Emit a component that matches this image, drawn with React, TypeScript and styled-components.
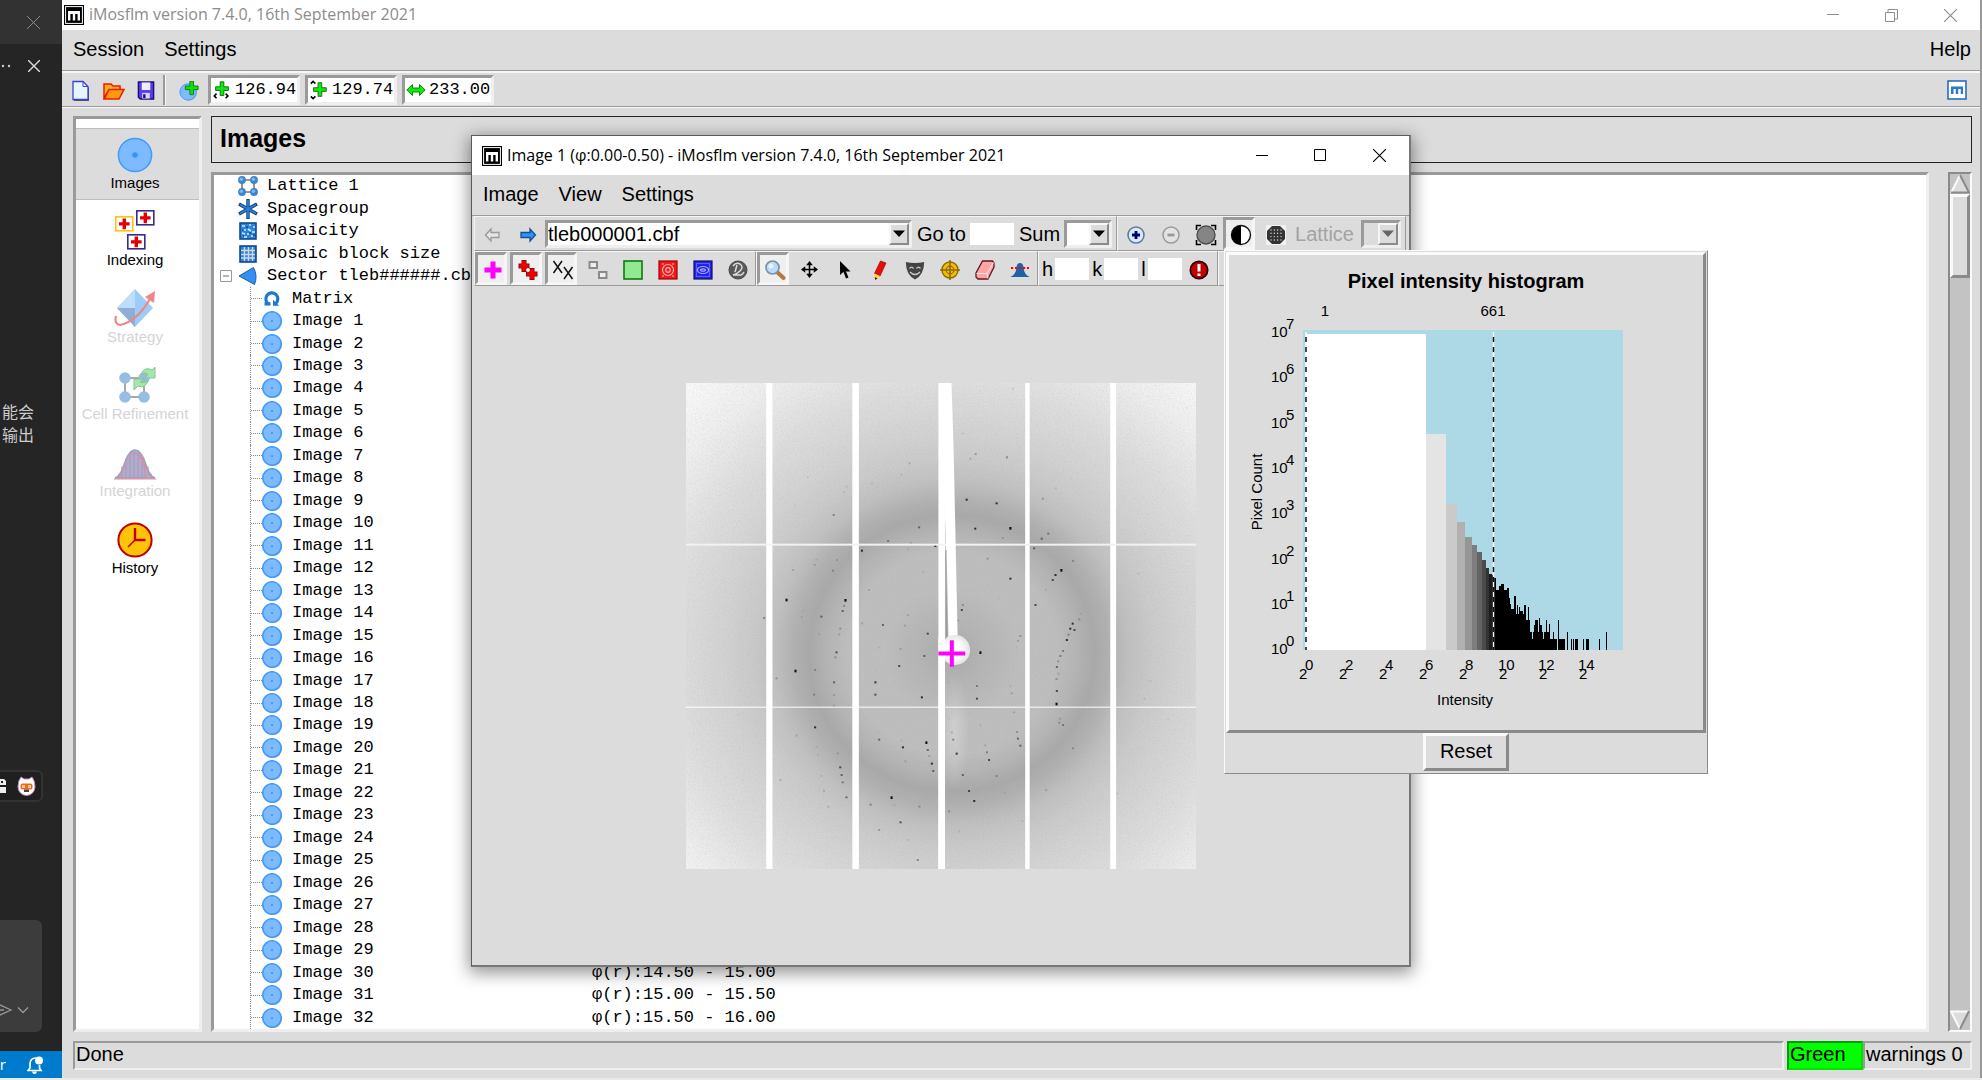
import React from "react";
import styled, { createGlobalStyle, css } from "styled-components";

const sans = `"Liberation Sans", Arial, sans-serif`;
const mono = `"Liberation Mono", "Courier New", monospace`;
const ui = `"Open Sans", "Noto Sans", sans-serif`;
const cjk = `"Liberation Sans", "Noto Sans CJK SC", sans-serif`;
const face = "#dcdcdc";

const Global = createGlobalStyle`
  *, *::before, *::after { box-sizing: border-box; }
  body { margin: 0; background: #e9e9e9; font-family: ${sans}; font-size: 20px; line-height: 24px; color: #000; overflow: hidden; }
  button, input, select { font: inherit; color: inherit; margin: 0; padding: 0; border: 0; border-radius: 0; background: none; }
  svg { display: block; flex: none; }
`;

const sunken = css`
  border: 3px solid;
  border-color: #9a9a9a #efefef #efefef #9a9a9a;
`;
const raised = css`
  border: 3px solid;
  border-color: #fafafa #8a8a8a #8a8a8a #fafafa;
`;

/* ---------- desktop ---------- */

const Desktop = styled.div`
  position: relative;
  display: flex;
  height: 100vh;
  padding-bottom: 2px;
`;

/* ---------- editor strip ---------- */

const EditorStrip = styled.aside`
  width: 62px;
  display: flex;
  flex-direction: column;
  background: #252526;
  color: #ccc;
  overflow: hidden;
`;
const EditorTab = styled.div`
  height: 44px;
  padding-right: 22px;
  display: flex;
  align-items: center;
  justify-content: flex-end;
  background: #323233;
`;
const EditorActions = styled.div`
  height: 44px;
  padding-right: 22px;
  display: flex;
  align-items: center;
  justify-content: flex-end;
  gap: 17px;
`;
const EditorText = styled.p`
  margin: 313px 28px 0 0;
  font: 16px/23px ${cjk};
  display: flex;
  flex-direction: column;
  align-items: flex-end;
  white-space: nowrap;
`;
const Badge = styled.div`
  margin: 323px 19px 0 0;
  height: 32px;
  border: 2px solid #333334;
  border-left: 0;
  border-radius: 0 6px 6px 0;
  background: #1f1f1f;
  display: flex;
  align-items: center;
  justify-content: flex-end;
  padding-right: 5px;
  gap: 11px;
`;
const ChatBox = styled.div`
  margin: 118px 20px 0 0;
  height: 112px;
  border-radius: 0 6px 6px 0;
  background: #3c3c3c;
  display: flex;
  align-items: flex-end;
  justify-content: flex-end;
  gap: 5px;
  padding: 0 13px 15px 0;
`;
const EditorStatus = styled.div`
  margin-top: auto;
  height: 27px;
  background: #007acc;
  color: #fff;
  font: 15px/27px ${ui};
  display: flex;
  align-items: center;
  justify-content: flex-end;
  gap: 21px;
  padding-right: 18px;
`;

/* ---------- window parts ---------- */

const IconButton = styled.button<{ $w?: number; $on?: boolean }>`
  width: ${(p) => p.$w ?? 35}px;
  align-self: stretch;
  display: flex;
  align-items: center;
  justify-content: center;
  flex: none;
  padding-top: 2px;
  ${(p) =>
    p.$on &&
    css`
      width: 32px;
      margin-right: 3px;
      padding: 2px 0 0 3px;
      background: #efefef;
      border: 3px solid;
      border-color: #9a9a9a #f6f6f6 #f6f6f6 #9a9a9a;
    `}
`;

const TitleBar = styled.header<{ $h: number; $dim?: boolean }>`
  height: ${(p) => p.$h}px;
  flex: none;
  display: flex;
  align-items: center;
  padding-left: ${(p) => (p.$dim ? 2 : 10)}px;
  background: #fff;
  color: ${(p) => (p.$dim ? "#8c8c8c" : "#000")};
  font: 16px/20px ${ui};
`;
const TitleText = styled.h1`
  margin: 0 0 2px 5px;
  flex: 1;
  font: inherit;
`;
const WinControl = styled.button`
  width: 59px;
  flex: none;
  align-self: stretch;
  display: flex;
  align-items: center;
  justify-content: center;
`;
const MenuBar = styled.nav`
  height: 41px;
  flex: none;
  display: flex;
  align-items: center;
  gap: 20px;
  padding: 0 9px 3px 11px;
  border-bottom: 1px solid #9a9a9a;
`;
const MenuItem = styled.button<{ $end?: boolean }>`
  margin-left: ${(p) => (p.$end ? "auto" : 0)};
`;

/* ---------- main window ---------- */

const MainWindow = styled.main`
  flex: 1;
  min-width: 0;
  display: flex;
  flex-direction: column;
  background: ${face};
  border-right: 2px solid #999;
`;
const MainToolbar = styled.div`
  height: 36px;
  flex: none;
  display: flex;
  align-items: center;
  padding: 0 13px 0 2px;
  border-top: 2px solid #f6f6f6;
  border-bottom: 1px solid #9a9a9a;
`;
const Divider = styled.span`
  width: 3px;
  height: 30px;
  margin: 0 5px 0 2px;
  border-left: 2px solid #9a9a9a;
  border-right: 1px solid #f6f6f6;
`;
const Reading = styled.label`
  ${sunken}
  width: 92px;
  height: 30px;
  margin: 0 3px 0 2px;
  padding-left: 1px;
  display: flex;
  align-items: center;
  background: #fff;
  input { width: 62px; min-width: 0; flex: 1; font: 17px/22px ${mono}; padding-left: 3px; }
`;
const Spacer = styled.span`
  flex: 1;
`;
const Body = styled.div`
  flex: 1;
  min-height: 0;
  display: flex;
  gap: 9px;
  padding: 8px 8px 9px 11px;
  border-top: 1px solid #f6f6f6;
`;
const Sidebar = styled.nav`
  ${sunken}
  width: 129px;
  display: flex;
  flex-direction: column;
  gap: 5px;
  padding-top: 9px;
  background: #fff;
`;
const SideItem = styled.button<{ $on?: boolean }>`
  height: 72px;
  flex: none;
  display: flex;
  flex-direction: column;
  align-items: center;
  justify-content: flex-end;
  gap: 1px;
  padding: 0 5px 7px 0;
  border: solid ${(p) => (p.$on ? "#bdbdbd" : "transparent")};
  border-width: 1px 0;
  background: ${(p) => (p.$on ? face : "none")};
  font-size: 15px;
  line-height: 18px;
  &:disabled { color: #d4d4d4; svg { opacity: 0.5; } }
`;
const Content = styled.section`
  flex: 1;
  min-width: 0;
  display: flex;
  flex-direction: column;
  gap: 9px;
`;
const Heading = styled.h2`
  margin: 0;
  height: 47px;
  flex: none;
  border: 1px solid #222;
  padding: 0 8px;
  font-size: 25px;
  line-height: 43px;
`;
const TreeArea = styled.div`
  flex: 1;
  min-height: 0;
  display: flex;
  gap: 19px;
`;
const Tree = styled.ul`
  ${sunken}
  flex: 1;
  min-width: 0;
  margin: 0;
  padding: 0 0 0 1px;
  list-style: none;
  display: flex;
  flex-direction: column;
  background: #fff;
  font: 17px/22px ${mono};
`;
const TreeRow = styled.li`
  flex: 1;
  min-height: 0;
  display: grid;
  grid-template-columns: 377px 1fr;
  align-items: center;
  white-space: pre;
`;
const TreeName = styled.span<{ $child?: boolean }>`
  align-self: stretch;
  display: flex;
  align-items: center;
  gap: ${(p) => (p.$child ? 10 : 9)}px;
  margin-left: ${(p) => (p.$child ? 35 : 0)}px;
  border-left: ${(p) => (p.$child ? "1px dotted #888" : "0")};
`;
const Stub = styled.span`
  width: 11px;
  margin-right: -10px;
  border-top: 1px dotted #888;
`;
const Fold = styled.span`
  width: 23px;
  margin-right: -9px;
  padding-left: 5px;
  flex: none;
`;
const ScrollTrack = styled.div`
  width: 24px;
  border: 2px solid;
  border-color: #8a8a8a #fafafa #fafafa #8a8a8a;
  background: #c3c3c3;
  display: flex;
  flex-direction: column;
  align-items: stretch;
`;
const ScrollButton = styled.button`
  height: 20px;
  display: flex;
  justify-content: center;
`;
const ScrollThumb = styled.div`
  ${raised}
  height: 84px;
  margin-bottom: auto;
  background: ${face};
`;
const StatusBar = styled.footer`
  flex: none;
  height: 37px;
  display: flex;
  padding: 0 8px 8px 11px;
`;
const StatusCell = styled.output<{ $grow?: boolean; $w?: number; $ok?: boolean }>`
  ${sunken}
  border-width: 2px;
  ${(p) => (p.$grow ? "flex: 1; margin-right: 3px;" : `width: ${p.$w}px;`)}
  ${(p) => p.$ok && "background: #00ff00; border-color: #0a9a0a #00e000 #00e000 #0a9a0a;"}
  padding-left: 1px;
  line-height: 23px;
  white-space: nowrap;
`;

/* ---------- image window ---------- */

const ImageWindow = styled.section`
  position: absolute;
  left: 471px;
  top: 135px;
  width: 940px;
  height: 832px;
  display: flex;
  flex-direction: column;
  background: ${face};
  border: 1px solid #5a5a5a;
  border-right: 2px solid #777;
  border-bottom: 2px solid #777;
  box-shadow: 0 4px 16px 2px rgba(0, 0, 0, 0.42);
`;
const ToolRow = styled.div`
  height: 35px;
  flex: none;
  display: flex;
  padding: 0 3px 0 2px;
`;
const ToolGroup = styled.div<{ $grow?: boolean; $end?: boolean }>`
  flex: ${(p) => (p.$grow ? "1" : "none")};
  min-width: 0;
  display: flex;
  align-items: center;
  padding-right: ${(p) => (p.$end ? 4 : 0)}px;
  border: 1px solid;
  border-color: #f6f6f6 #9a9a9a #9a9a9a #f6f6f6;
`;
const ComboBox = styled.span<{ $w?: number; $off?: boolean }>`
  ${sunken}
  ${(p) => (p.$w ? `width: ${p.$w}px;` : "flex: 1;")}
  height: 28px;
  display: flex;
  background: ${(p) => (p.$off ? face : "#fff")};
  select {
    flex: 1;
    min-width: 0;
    appearance: none;
    outline: none;
    opacity: 1;
    line-height: 20px;
  }
`;
const Arrow = styled.span`
  width: 20px;
  border: 2px solid;
  border-color: #f6f6f6 #8a8a8a #8a8a8a #f6f6f6;
  background: ${face};
  display: flex;
  align-items: center;
  justify-content: center;
`;
const FieldLabel = styled.label<{ $off?: boolean; $before?: number; $after?: number }>`
  margin: 0 ${(p) => p.$after ?? 4}px 0 ${(p) => p.$before ?? 5}px;
  white-space: nowrap;
  line-height: 22px;
  color: ${(p) => (p.$off ? "#a3a3a3" : "inherit")};
`;
const Entry = styled.input<{ $w: number }>`
  && { width: ${(p) => p.$w}px; height: 22px; background: #fff; flex: none; }
`;
const Canvas = styled.div`
  flex: 1;
  display: flex;
  align-items: center;
  justify-content: center;
`;

/* ---------- histogram ---------- */

const Popup = styled.section`
  position: absolute;
  left: 1224px;
  top: 250px;
  width: 484px;
  height: 524px;
  display: flex;
  flex-direction: column;
  align-items: center;
  background: ${face};
  border: 1px solid;
  border-color: #fafafa #8a8a8a #8a8a8a #fafafa;
  padding: 1px 1px 2px 1px;
`;
const PlotFrame = styled.div`
  ${raised}
  flex: 1;
  align-self: stretch;
`;
const ResetButton = styled.button`
  ${raised}
  width: 86px;
  height: 38px;
  padding-bottom: 2px;
`;

/* ---------- icons ---------- */

const MLogo = ({ blue }: { blue?: boolean }) =>
  blue ? (
    <svg width="20" height="20" viewBox="0 0 20 20">
      <rect x="1" y="1" width="18" height="18" fill="#fff" stroke="#2a6fc0" strokeWidth="1.6" />
      <path d="M4 6.5H16V14H13.8V9H11.2V14H8.8V9H6.5V14H4Z" fill="#2a78d0" />
    </svg>
  ) : (
    <svg width="20" height="20" viewBox="0 0 20 20">
      <rect width="20" height="20" fill="#000" />
      <rect x="1.6" y="1.6" width="16.8" height="16.8" fill="none" stroke="#fff" strokeWidth="1" />
      <path d="M4 6H16V15.5H13.6V9H11.2V15.5H8.8V9H6.4V15.5H4Z" fill="#fff" />
    </svg>
  );

const Cross = ({ size = 13, color, w = 1 }: { size?: number; color: string; w?: number }) => (
  <svg width={size} height={size} viewBox="0 0 12 12">
    <path d="M0 0L12 12M12 0L0 12" stroke={color} strokeWidth={w} />
  </svg>
);
const Minimise = ({ c }: { c: string }) => (
  <svg width="12" height="12"><path d="M0 5.5H12" stroke={c} /></svg>
);
const Maximise = ({ c, restore }: { c: string; restore?: boolean }) => (
  <svg width="13" height="13" fill="none" stroke={c}>
    {restore ? <path d="M.5 3.5H9.5V12.5H.5ZM3 3.5V.5H12.5V10H9.5" /> : <path d="M.5 .5H11.5V11.5H.5Z" />}
  </svg>
);

const Disc = ({ size }: { size: number }) => (
  <svg width={size} height={size} viewBox="0 0 36 36">
    {size < 30 && <circle cx="20" cy="20" r="16" fill="#7d7d7d" opacity=".6" />}
    <circle cx="18" cy="18" r="16.6" fill="#7ebaff" stroke="#3f9bff" strokeWidth={size < 30 ? 3 : 1.5} />
    <circle cx="18" cy="18" r={size < 30 ? 2 : 2.8} fill="#3a94f5" />
  </svg>
);

const LatticeIcon = () => (
  <svg width="20" height="20" viewBox="0 0 20 20">
    <path d="M4 4H16V16H4Z" fill="none" stroke="#777" strokeWidth="1.6" />
    {[[4, 4], [16, 4], [4, 16], [16, 16]].map(([x, y]) => (
      <g key={`${x}-${y}`}>
        <circle cx={x} cy={y} r="3.9" fill="#3b85cc" />
        <circle cx={x - 0.6} cy={y - 0.8} r="1.8" fill="#7fb9ee" />
      </g>
    ))}
  </svg>
);
const StarIcon = () => (
  <svg width="20" height="20" viewBox="0 0 20 20" strokeLinecap="butt">
    <path d="M10 0V20M1 5L19 15M19 5L1 15" stroke="#0f3f78" strokeWidth="3.4" />
    <path d="M10 1V19M2 5.5L18 14.5M18 5.5L2 14.5" stroke="#2b80d8" strokeWidth="1.7" />
  </svg>
);
const MosaicIcon = () => (
  <svg width="20" height="20" viewBox="0 0 20 20">
    <rect x="2" y="2" width="16" height="16" fill="#2b83e0" stroke="#0f4c8c" strokeWidth="1.6" />
    <path d="M4 5h3M11 4h2M15 6h2M6 9h2M10 8l3 2M14 11h3M4 12l3 1M9 13h2M6 16h3M13 15h2" stroke="#d6e9fb" strokeWidth="1.6" />
    <path d="M4 9h1M8 6h2M11 12h2M15 14h2M5 15h1" stroke="#0f4c8c" strokeWidth="1.6" />
  </svg>
);
const BlockIcon = () => (
  <svg width="20" height="20" viewBox="0 0 20 20">
    <rect x="2" y="2" width="16" height="16" fill="#2b83e0" stroke="#0f4c8c" strokeWidth="1.6" />
    <path d="M6.5 3V17M10.5 3V17M14.5 3V17M3 6.5H17M3 10.5H17M3 14H17" stroke="#d3d6da" strokeWidth="1.4" />
  </svg>
);
const SectorIcon = () => (
  <svg width="20" height="20" viewBox="0 0 20 20">
    <path d="M1 10L15.5 1.5Q20 10 16.5 18.5Z" fill="#3390f2" stroke="#1b5fae" />
  </svg>
);
const MatrixIcon = () => (
  <svg width="20" height="20" viewBox="0 0 20 20">
    <path d="M7 15.2A6 6 0 1 1 13.8 14.4" fill="none" stroke="#1b78d2" strokeWidth="3.2" />
    <path d="M2.5 13.2H8.5V16.5H2.5ZM11 10.8V16.8H17.2Z" fill="#1b78d2" />
  </svg>
);
const MinusBox = () => (
  <svg width="12" height="12"><path d="M.5 .5H11.5V11.5H.5Z" fill="#fff" stroke="#999" /><path d="M3 6H9" stroke="#666" /></svg>
);

const Tile = ({ x, y, c }: { x: number; y: number; c: string }) => (
  <g transform={`translate(${x} ${y})`}>
    <rect x=".8" y=".8" width="17" height="14" fill="#fff" stroke={c} strokeWidth="1.6" />
    <path d="M9.3 2.6V13.2M4 7.9H14.6" stroke="#e00000" strokeWidth="3.4" />
  </g>
);
const IndexingIcon = () => (
  <svg width="42" height="40" viewBox="0 0 42 40">
    <Tile x={1} y={6} c="#ffc20e" />
    <Tile x={22} y={0} c="#352c8c" />
    <Tile x={13} y={24} c="#352c8c" />
  </svg>
);
const StrategyIcon = () => (
  <svg width="42" height="38" viewBox="0 0 42 38">
    <path d="M21 0L39 19L21 38L3 19Z" fill="#3f9bf5" />
    <path d="M3 19H21V38Z" fill="#1c62a8" />
    <path d="M21 0V19H3Z" fill="#7ebcf8" />
    <path d="M2 27Q0 35 6 36Q24 32 37 8" fill="none" stroke="#e01010" strokeWidth="2.2" />
    <path d="M41 2L31 8L40 14Z" fill="#e01010" />
  </svg>
);
const RefineIcon = () => (
  <svg width="42" height="38" viewBox="0 0 42 38">
    <path d="M11 12H30V31H11Z" fill="none" stroke="#555" strokeWidth="2" />
    {[[11, 12], [11, 31], [30, 31], [30, 12]].map(([x, y]) => (
      <circle key={`${x}-${y}`} cx={x} cy={y} r="5.8" fill="#2f7fc8" />
    ))}
    <path d="M27 8Q31 0 38 4L41 1V12H31L34 8Q31 6 27 8Z" fill="#49d05a" stroke="#158a28" />
    <path d="M34 15Q31 23 24 20L20 24V13H30L26 16Q30 18 34 15Z" fill="#49d05a" stroke="#158a28" />
  </svg>
);
const IntegrationIcon = () => (
  <svg width="42" height="32" viewBox="0 0 42 32">
    <path d="M1 29Q7 27 11 13Q15 1 21 1Q27 1 31 13Q35 27 41 29Z" fill="#2f6fc0" stroke="#1f4f90" strokeWidth="1.5" />
    <path d="M0 30H42M5 30V26H8V18H12V10H16V4H26V10H30V18H34V26H37V30M8 30V24M12 30V14M16 30V6M20 30V2M24 30V4M28 30V8M31 30V16" fill="none" stroke="#d01030" strokeWidth="1.2" />
  </svg>
);
const HistoryIcon = () => (
  <svg width="36" height="36" viewBox="0 0 36 36">
    <circle cx="18" cy="18" r="16.6" fill="#ffc40a" stroke="#c00000" strokeWidth="2" />
    <path d="M18 6V18H28.5" fill="none" stroke="#c00000" strokeWidth="2.4" />
    <path d="M18 18L11 25" stroke="#c00000" strokeWidth="1.4" />
  </svg>
);

const NewIcon = () => (
  <svg width="20" height="22" viewBox="0 0 20 22">
    <path d="M3 3H13L18 8V21H3Z" fill="#555" />
    <path d="M2 1.5H12L17 6.5V19.5H2Z" fill="#e4f6ff" stroke="#3f3fd8" strokeWidth="1.3" />
    <path d="M12 1.5V6.5H17" fill="none" stroke="#3f3fd8" />
  </svg>
);
const OpenIcon = () => (
  <svg width="22" height="18" viewBox="0 0 22 18">
    <path d="M1 16V2H8L10 4H17V8H6Z" fill="#ffb020" stroke="#f01a00" strokeWidth="1.5" />
    <path d="M1.5 17L6 7.5H21L16 17Z" fill="#ff9a10" stroke="#f01a00" strokeWidth="1.5" />
  </svg>
);
const SaveIcon = () => (
  <svg width="18" height="19" viewBox="0 0 18 20">
    <path d="M1 1H17V19H3L1 17Z" fill="#5a3cf0" stroke="#1a1070" strokeWidth="1.5" />
    <rect x="4.5" y="1.5" width="9" height="8" fill="#f1ecff" />
    <rect x="5" y="12.5" width="8" height="6" fill="#d9d4ee" />
    <rect x="6" y="14" width="2.5" height="4" fill="#1a1070" />
  </svg>
);
const plus = "M6 0H10V5.5H15V9.5H10V15H6V9.5H1V5.5H6Z";
const AddImageIcon = () => (
  <svg width="20" height="20" viewBox="0 0 22 22">
    <circle cx="11" cy="13" r="8.6" fill="#777" opacity=".5" />
    <circle cx="10" cy="12" r="9" fill="#7ebaff" stroke="#3f9bff" />
    <g transform="translate(6 0)"><path d={plus} fill="#10e010" stroke="#0a7a0a" /></g>
  </svg>
);
const BeamXIcon = () => (
  <svg width="20" height="20" viewBox="0 0 20 22">
    <g transform="translate(2 2)"><path d={plus} fill="#10e810" stroke="#0a6a0a" /></g>
    <path d="M4 15L1.5 17.5L4 20M14 15L16.5 17.5L14 20" fill="none" stroke="#000" strokeWidth="1.7" />
  </svg>
);
const BeamYIcon = () => (
  <svg width="20" height="20" viewBox="0 0 20 22">
    <g transform="translate(3 3)"><path d={plus} fill="#10e810" stroke="#0a6a0a" /></g>
    <path d="M1 4L3.5 1.5L6 4M1 18L3.5 20.5L6 18" fill="none" stroke="#000" strokeWidth="1.7" />
  </svg>
);
const DistanceIcon = () => (
  <svg width="20" height="14" viewBox="0 0 20 14">
    <path d="M.8 7L6.5 1.5V5H13.5V1.5L19.2 7L13.5 12.5V9H6.5V12.5Z" fill="#10e810" stroke="#0a8a0a" />
  </svg>
);

const ArrowIcon = ({ back }: { back?: boolean }) => (
  <svg width="18" height="16" viewBox="0 0 18 16">
    {back ? (
      <path d="M1.5 8L7 2V5.5H15V10.5H7V14Z" fill="#e4e4e4" stroke="#999" strokeWidth="1.3" />
    ) : (
      <path d="M16.5 8L11 2V5.5H2V10.5H11V14Z" fill="#2f92f4" stroke="#17508c" strokeWidth="1.3" />
    )}
  </svg>
);
const ZoomIcon = ({ out }: { out?: boolean }) => (
  <svg width="20" height="20" viewBox="0 0 20 20">
    <circle cx="10" cy="10" r="8" fill={out ? "#e3e3e3" : "#d8ebff"} stroke={out ? "#9a9a9a" : "#5478a8"} strokeWidth="1.5" />
    <path d={out ? "M6.5 10H13.5" : "M6 10H14M10 6V14"} stroke={out ? "#999" : "#00007c"} strokeWidth="2.8" />
  </svg>
);
const FitIcon = () => (
  <svg width="22" height="22" viewBox="0 0 22 22">
    <path d="M1.5 6V1.5H6M16 1.5H20.5V6M20.5 16V20.5H16M6 20.5H1.5V16" fill="none" stroke="#000" strokeWidth="1.6" />
    <circle cx="11" cy="11" r="9" fill="#858585" stroke="#4d4d4d" strokeWidth="1.4" />
  </svg>
);
const ContrastIcon = () => (
  <svg width="22" height="22" viewBox="0 0 22 22">
    <circle cx="11" cy="11" r="9.5" fill="#fff" stroke="#111" strokeWidth="1.4" />
    <path d="M11 1.5A9.5 9.5 0 0 0 11 20.5Z" />
  </svg>
);
const dots = [5, 8.3, 11.6, 15];
const DottedIcon = () => (
  <svg width="20" height="20" viewBox="0 0 20 20">
    <rect width="20" height="20" fill="#f2f2f2" />
    <path d="M6 1H14L19 6V14L14 19H6L1 14V6Z" fill="#333" />
    {dots.flatMap((x) => dots.map((y) => <circle key={`${x}-${y}`} cx={x} cy={y} r=".7" fill="#ddd" />))}
  </svg>
);
const PlusIcon = () => (
  <svg width="20" height="20" viewBox="0 0 20 20"><path d="M10 1.5V18.5M1.5 10H18.5" stroke="#ff00ff" strokeWidth="5" /></svg>
);
const SpotsIcon = () => (
  <svg width="22" height="22" viewBox="0 0 22 22">
    <path d="M7 1V13M1.5 7H12.5M15 9V21M9 15H20.5M7 7L15 15" stroke="#7a1010" strokeWidth="5" />
    <path d="M7 2V12M2.5 7H11.5M15 10V20M10 15H19.5" stroke="#f00000" strokeWidth="3.6" />
    <circle cx="11" cy="11" r="2" fill="#eee" />
  </svg>
);
const XXIcon = () => (
  <svg width="22" height="22" viewBox="0 0 22 22">
    <path d="M1.5 2L10 14M10 2L1.5 14M12 8L20.5 20M20.5 8L12 20" stroke="#111" strokeWidth="1.5" />
  </svg>
);
const BoxesIcon = () => (
  <svg width="20" height="20" viewBox="0 0 20 20" fill="#eee" stroke="#8a8a8a" strokeWidth="2">
    <path d="M1.5 2H9V8H1.5ZM11 12H18.5V18H11Z" />
  </svg>
);
const GreenIcon = () => (
  <svg width="20" height="20"><rect x="1" y="1" width="18" height="18" fill="#93e893" stroke="#0d7a0d" strokeWidth="1.6" /></svg>
);
const RedIcon = () => (
  <svg width="20" height="20" viewBox="0 0 20 20" fill="none" stroke="#ffb0b0" strokeWidth="1.2">
    <rect x="1" y="1" width="18" height="18" fill="#f01818" stroke="#a00000" />
    <circle cx="10" cy="10" r="5.5" /><circle cx="10" cy="10" r="2.3" />
    <path d="M4 4H6M14 4H16M4 16H6M14 16H16" />
  </svg>
);
const BlueIcon = () => (
  <svg width="20" height="20" viewBox="0 0 20 20" fill="none" stroke="#a8b0ff" strokeWidth="1.2">
    <rect x="1" y="1" width="18" height="18" fill="#2020e8" stroke="#101070" />
    <rect x="3.5" y="3.5" width="13" height="13" stroke="#5a60ff" />
    <ellipse cx="10" cy="10" rx="5.5" ry="3.5" /><ellipse cx="10" cy="10" rx="2.5" ry="1.2" />
  </svg>
);
const ResolutionIcon = () => (
  <svg width="22" height="22" viewBox="0 0 22 22">
    <circle cx="11" cy="11" r="9" fill="#5a5a5a" stroke="#444" />
    <path d="M6 7Q9 3 13 5Q17 8 13 12Q10 15 6 16H14Q16 15 17 13M10 6L8 13" fill="none" stroke="#ddd" strokeWidth="1.5" />
  </svg>
);
const LensIcon = () => (
  <svg width="22" height="22" viewBox="0 0 22 22">
    <path d="M13 13L19.5 19" stroke="#b8793a" strokeWidth="4" strokeLinecap="round" />
    <circle cx="8.5" cy="8.5" r="6.5" fill="#b8dcfa" stroke="#7a90a8" strokeWidth="1.7" />
    <circle cx="7" cy="7" r="2.5" fill="#eaf6ff" />
  </svg>
);
const MoveIcon = () => (
  <svg width="17" height="17" viewBox="0 0 18 18">
    <path d="M9 2V16M2 9H16" stroke="#000" strokeWidth="1.6" />
    <path d="M9 0L12.5 4.5H5.5ZM9 18L5.5 13.5H12.5ZM0 9L4.5 5.5V12.5ZM18 9L13.5 12.5V5.5Z" />
  </svg>
);
const CursorIcon = () => (
  <svg width="14" height="18" viewBox="0 0 14 18"><path d="M2 0V14L5.5 11L8 17.5L10.5 16.5L8 10.5H12.5Z" /></svg>
);
const PencilIcon = () => (
  <svg width="16" height="22" viewBox="0 0 16 22">
    <path d="M8.5 2L14 4L8 17L2.5 14.5Z" fill="#e80c0c" stroke="#900" strokeWidth=".7" />
    <path d="M2.5 14.5L8 17L3.5 20.5Z" fill="#ffdd20" />
    <path d="M2.8 18L3.2 21L5.5 19.5Z" fill="#700" />
  </svg>
);
const MaskIcon = () => (
  <svg width="20" height="20" viewBox="0 0 20 20">
    <path d="M.8 2Q10 4 19.2 2Q19 15 10 19.5Q1 15 .8 2Z" fill="#444" />
    <path d="M4.5 8.5Q6.5 5.8 8.5 8.5M11.5 8.5Q13.5 5.8 15.5 8.5M5 12Q10 17 15 12" fill="none" stroke="#ccc" strokeWidth="1.3" />
  </svg>
);
const TargetIcon = () => (
  <svg width="20" height="20" viewBox="0 0 20 20">
    <circle cx="10" cy="10" r="8" fill="#f2bd10" stroke="#8f6c00" strokeWidth="1.5" />
    <path d="M10 0V20M0 10H20" stroke="#8f6c00" strokeWidth="1.6" />
    <circle cx="10" cy="10" r="3.8" fill="none" stroke="#8f6c00" strokeWidth="1.2" />
  </svg>
);
const EraserIcon = () => (
  <svg width="20" height="20" viewBox="0 0 20 20">
    <path d="M7.5 1H17.5L19 3V7L13 19H3L1 17V13Z" fill="#ffa3a3" stroke="#5a1d1d" strokeWidth="1.3" />
    <path d="M1.5 13.5H12L18.5 2.5M12 13.5L13 18.5" fill="none" stroke="#fde" strokeWidth="1.2" />
  </svg>
);
const PeakIcon = () => (
  <svg width="20" height="16" viewBox="0 0 20 16">
    <path d="M0 15Q6 13 6.5 5Q7 1 10 1Q13 1 13.5 5Q14 13 20 15Z" fill="#1e62a8" />
    <path d="M1 6H19" stroke="#f00" strokeWidth="2.2" strokeDasharray="2.2 1.8" />
  </svg>
);
const AlertIcon = () => (
  <svg width="20" height="20" viewBox="0 0 20 20">
    <circle cx="10" cy="10" r="8.7" fill="#c40000" stroke="#2a0000" strokeWidth="1.7" />
    <path d="M10 4V11.5M10 13.5V16" stroke="#fff" strokeWidth="3" />
  </svg>
);
const DropArrow = ({ off }: { off?: boolean }) => (
  <svg width="12" height="7" viewBox="0 0 12 7"><path d="M0 .5H12L6 7Z" fill={off ? "#666" : "#000"} /></svg>
);

const MascotIcon = () => (
  <svg width="19" height="20" viewBox="0 0 19 20">
    <path d="M1 11Q1 5 4 1L7 3H12L15 1Q18 5 18 11Q17 19 9.5 19.5Q2 19 1 11Z" fill="#fff" stroke="#c98ac0" />
    <rect x="3.5" y="7.5" width="12" height="6" rx="2" fill="#f26a10" />
    <rect x="5" y="9" width="3" height="3" fill="#ffc79a" /><rect x="11" y="9" width="3" height="3" fill="#ffc79a" />
    <path d="M7 13.5H12V16H7Z" fill="#444" />
  </svg>
);
const GridBitsIcon = () => (
  <svg width="6" height="16" viewBox="0 0 6 16">
    <path d="M0 1H4L6 3V7H0ZM0 9H6V15H0Z" fill="#eee" /><rect x="1" y="3" width="2" height="2" fill="#222" />
  </svg>
);
const BellIcon = () => (
  <svg width="17" height="18" viewBox="0 0 17 18">
    <path d="M9 2Q3 2 3 8V12L1 14.5H14L12.5 12V9" fill="none" stroke="#fff" strokeWidth="1.7" />
    <circle cx="12" cy="4.5" r="4" fill="#fff" /><path d="M5 15.5H10Q9.5 18 7.5 18Q5.5 18 5 15.5Z" fill="#fff" />
  </svg>
);

/* ---------- diffraction image ---------- */

// Spot positions as [x, y, darkness], on the detector's own grid.
const spots: [number, number, number][] = [
  [861, 389, 9], [948, 400, 9], [988, 474, 10], [886, 476, 9], [1098, 491, 6], [1079, 506, 7], [1057, 535, 7], [966, 504, 4],
  [1082, 386, 5], [978, 262, 6], [872, 266, 4], [887, 252, 5], [850, 191, 3], [996, 56, 3], [1119, 355, 3], [1165, 325, 2],
  [1185, 310, 2], [1013, 232, 2], [695, 280, 4], [672, 314, 3], [586, 340, 3], [513, 350, 3], [505, 367, 3], [400, 321, 3],
  [475, 435, 6], [363, 408, 2], [723, 472, 7], [633, 513, 6], [770, 528, 9], [557, 542, 9], [699, 519, 4], [690, 536, 3],
  [425, 569, 3], [419, 585, 4], [484, 570, 4], [473, 602, 5], [357, 600, 4], [338, 689, 10], [509, 690, 10], [505, 708, 5],
  [501, 723, 7], [439, 740, 7], [273, 744, 6], [386, 723, 2], [382, 741, 3], [494, 776, 5], [491, 793, 4], [483, 847, 8],
  [480, 862, 5], [433, 793, 3], [364, 902, 10], [421, 900, 5], [309, 925, 5], [476, 937, 7], [418, 974, 5], [476, 975, 4],
  [476, 1007, 4], [578, 660, 4], [557, 760, 4], [618, 765, 7], [690, 735, 4], [682, 767, 4], [748, 791, 8], [607, 832, 3],
  [669, 837, 4], [738, 858, 7], [665, 888, 8], [596, 937, 9], [596, 974, 8], [596, 899, 2], [731, 982, 9], [735, 605, 3],
  [922, 566, 5], [988, 626, 9], [1170, 573, 5], [1136, 600, 10], [1119, 615, 9], [1111, 630, 8], [1091, 659, 3], [1061, 705, 8],
  [850, 705, 5], [847, 720, 8], [836, 752, 4], [954, 686, 2], [1169, 761, 9], [1162, 776, 9], [1174, 780, 8], [1157, 794, 6],
  [1152, 810, 9], [1188, 748, 5], [1192, 731, 3], [1141, 843, 6], [1133, 858, 6], [1127, 874, 5], [1123, 891, 7], [1128, 911, 4],
  [1122, 927, 5], [1123, 963, 8], [1122, 1001, 10], [1017, 798, 5], [1010, 813, 4], [1006, 830, 2], [901, 847, 10], [891, 948, 6],
  [891, 986, 8], [988, 949, 3], [992, 970, 4], [808, 937, 2], [1132, 1046, 4], [1130, 1058, 5], [1141, 1065, 6], [1170, 1135, 5],
  [999, 1027, 4], [1007, 1086, 5], [1010, 1106, 7], [1017, 1127, 7], [901, 1065, 3], [915, 1126, 4], [920, 1147, 6], [926, 1170, 8],
  [810, 1045, 2], [818, 1087, 4], [822, 1109, 6], [832, 1151, 9], [850, 1215, 7], [868, 1263, 8], [883, 1293, 9], [948, 1218, 5],
  [971, 1268, 3], [810, 1324, 5], [839, 1384, 3], [1023, 1353, 3], [1092, 1260, 4], [744, 1117, 10], [748, 1140, 7], [752, 1158, 4],
  [760, 1181, 9], [764, 1203, 7], [676, 1132, 9], [672, 1111, 3], [683, 1174, 4], [607, 1109, 7], [605, 1087, 2], [421, 1072, 9],
  [367, 1097, 4], [425, 1132, 3], [429, 1155, 3], [487, 1150, 4], [494, 1192, 8], [498, 1215, 7], [501, 1237, 6], [439, 1218, 3],
  [447, 1263, 4], [512, 1282, 7], [459, 1310, 4], [643, 1282, 10], [651, 1305, 3], [582, 1304, 6], [669, 1357, 8], [607, 1380, 5],
  [690, 1410, 3], [719, 1470, 6], [724, 1310, 5], [320, 1230, 4], [211, 1230, 2], [1377, 986, 3], [1395, 934, 3], [1385, 930, 2],
  [1360, 611, 3], [1447, 1048, 2], [1299, 1271, 3], [197, 1034, 2],
];

const Diffraction = () => (
  <svg width="510" height="486" viewBox="46 39 1481 1458" preserveAspectRatio="none">
    <defs>
      <radialGradient id="halo" gradientUnits="userSpaceOnUse" cx="818" cy="850" r="1120">
        <stop offset="0" stopColor="#a9a9a9" />
        <stop offset=".08" stopColor="#b4b4b4" />
        <stop offset=".18" stopColor="#bebebe" />
        <stop offset=".27" stopColor="#bebebe" />
        <stop offset=".32" stopColor="#b5b5b5" />
        <stop offset=".37" stopColor="#a9a9a9" />
        <stop offset=".41" stopColor="#b1b1b1" />
        <stop offset=".46" stopColor="#c0c0c0" />
        <stop offset=".52" stopColor="#cacaca" />
        <stop offset=".6" stopColor="#d3d3d3" />
        <stop offset=".72" stopColor="#dedede" />
        <stop offset=".86" stopColor="#efefef" />
        <stop offset="1" stopColor="#fafafa" />
      </radialGradient>
      <filter id="grain" x="0" y="0" width="100%" height="100%">
        <feTurbulence type="fractalNoise" baseFrequency="0.25" numOctaves="3" seed="4" />
        <feColorMatrix values="0 0 0 0 0.35  0 0 0 0 0.35  0 0 0 0 0.35  2 0 0 0 -0.85" />
      </filter>
      <radialGradient id="stop" cx=".45" cy=".5" r=".5">
        <stop offset=".5" stopColor="#fff" />
        <stop offset="1" stopColor="#e6e6e6" />
      </radialGradient>
      <radialGradient id="streak">
        <stop offset="0" stopColor="#fff" stopOpacity=".28" />
        <stop offset="1" stopColor="#fff" stopOpacity="0" />
      </radialGradient>
    </defs>
    <rect x="46" y="39" width="1481" height="1458" fill="url(#halo)" />
    <ellipse cx="825" cy="1080" rx="42" ry="180" fill="url(#streak)" />
    <rect x="46" y="39" width="1481" height="1458" filter="url(#grain)" opacity=".2" />
    {spots.map(([x, y, d]) => (
      <rect key={`${x}-${y}`} x={x - 3} y={y - 3} width="6" height={d > 9 ? 8 : 6} fill="#000" opacity={(d * d) / 110} />
    ))}
    <path d="M279 39H297V1497H279ZM529 39H548V1497H529ZM779 39H798V1497H779ZM1031 39H1044V1497H1031ZM1278 39H1295V1497H1278Z" fill="#fff" />
    <rect x="46" y="521" width="1481" height="6" fill="#f2f2f2" />
    <rect x="46" y="1010" width="1481" height="3" fill="#fff" />
    <path d="M785 39H817L823 235L829 520L835 810H806L799 470Z" fill="#fff" />
    <path d="M799 540H803L808 800H801Z" fill="#888" opacity=".6" />
    <ellipse cx="828" cy="840" rx="43" ry="45" fill="url(#stop)" />
    <path d="M798 860V1497H779V800H798Z" fill="#fff" />
    <path d="M818 811V890M779 850.5H857" stroke="#ff00ff" strokeWidth="11.5" />
  </svg>
);

/* ---------- histogram plot ---------- */

// Each bar is [left, right, top, colour], in thirds of a pixel.
const bars: [number, number, number, string][] = [
  [678, 738, -19, "#e4e4e4"], [738, 771, 191, "#cacaca"], [771, 796, 247, "#b0b0b0"], [796, 815, 290, "#969696"],
  [815, 830, 316, "#7d7d7d"], [830, 845, 335, "#646464"], [845, 857, 361, "#4b4b4b"], [857, 868, 383, "#333"],
  [868, 876, 402, "#1c1c1c"],
];
const tail =
  "M875 630V405H880V414H889V450H898V438H904V431H912V450H920V443H928V474H931V492H934V507H943V468H947V498H949V521H951V495H955V521H957V500H961V514H969V521H973V495H977V575H979V541H984V500H988V541H991V575H995V597H1000V575H1003V556H1006V541H1013V575H1017V533H1021V556H1025V575H1030V597H1033V575H1037V541H1041V575H1047V553H1051V597H1059V575H1063V597H1070V630ZM1074 630V541H1078V597H1096V630ZM1101 630V575H1104V630ZM1112 630V597H1115V630ZM1119 630V597H1122V630ZM1126 630V597H1134V630ZM1149 630V597H1152V630ZM1159 630V597H1168V630ZM1198 630V597H1201V630ZM1217 630V575H1220V630Z";
const yTicks = [7, 6, 5, 4, 3, 2, 1, 0];
const xTicks = [0, 2, 4, 6, 8, 10, 12, 14];

const Histogram = () => (
  <svg width="100%" height="100%" viewBox="1229 255 474 475" fontFamily={sans} fontSize="15" role="img" aria-label="Pixel intensity histogram">
    <text x="1466" y="288" textAnchor="middle" fontSize="20" fontWeight="700">Pixel intensity histogram</text>
    <text x="1325" y="316" textAnchor="middle">1</text>
    <text x="1493" y="316" textAnchor="middle">661</text>
    {yTicks.map((n, i) => (
      <g key={n}>
        <text x="1271" y={337 + Math.round(i * 45.3)}>10</text>
        <text x="1286" y={329 + Math.round(i * 45.3)}>{n}</text>
      </g>
    ))}
    {xTicks.map((n, i) => (
      <g key={n}>
        <text x={1299 + i * 40} y="679">2</text>
        <text x={n > 9 ? 1498 + (i - 5) * 40 : 1305 + i * 40} y="670">{n}</text>
      </g>
    ))}
    <text x="1465" y="705" textAnchor="middle">Intensity</text>
    <text transform="translate(1262 492) rotate(-90)" textAnchor="middle">Pixel Count</text>
    <rect x="1303" y="330" width="320" height="320" fill="#add8e6" />
    <rect x="1306" y="334" width="120" height="316" fill="#fff" />
    <g transform="translate(1200 440) scale(.33333)" shapeRendering="crispEdges">
      {bars.map(([l, r, t, c]) => <rect key={l} x={l} y={t} width={r - l} height={630 - t} fill={c} />)}
      <path d={tail} />
    </g>
    <path d="M1306 332V650M1493.5 332V650" stroke="#fff" strokeWidth="1.5" />
    <path d="M1306 337V650M1493.5 337V650" stroke="#111" strokeWidth="1.5" strokeDasharray="5 5" />
  </svg>
);

/* ---------- data ---------- */

const roots = [
  { name: "Lattice 1", icon: <LatticeIcon /> },
  { name: "Spacegroup", icon: <StarIcon /> },
  { name: "Mosaicity", icon: <MosaicIcon /> },
  { name: "Mosaic block size", icon: <BlockIcon /> },
  { name: "Sector tleb######.cbf", icon: <SectorIcon />, open: true },
];
const images = Array.from({ length: 32 }, (_, i) => ({
  name: `Image ${i + 1}`,
  phi: `φ(r):${(i / 2).toFixed(2)} - ${((i + 1) / 2).toFixed(2)}`,
}));
const steps = [
  { name: "Images", icon: <Disc size={36} />, on: true },
  { name: "Indexing", icon: <IndexingIcon /> },
  { name: "Strategy", icon: <StrategyIcon />, off: true },
  { name: "Cell Refinement", icon: <RefineIcon />, off: true },
  { name: "Integration", icon: <IntegrationIcon />, off: true },
  { name: "History", icon: <HistoryIcon /> },
];
const overlayTools = [
  { label: "Beam centre", icon: <PlusIcon />, on: true },
  { label: "Spots", icon: <SpotsIcon />, on: true },
  { label: "Bad spots", icon: <XXIcon />, on: true },
  { label: "Predictions", icon: <BoxesIcon /> },
  { label: "Masks", icon: <GreenIcon /> },
  { label: "Spotfinding area", icon: <RedIcon /> },
  { label: "Resolution ellipse", icon: <BlueIcon /> },
  { label: "Resolution limits", icon: <ResolutionIcon /> },
];
const editTools = [
  { label: "Zoom", icon: <LensIcon />, on: true },
  { label: "Pan", icon: <MoveIcon /> },
  { label: "Select", icon: <CursorIcon /> },
  { label: "Draw spot", icon: <PencilIcon /> },
  { label: "Mask", icon: <MaskIcon /> },
  { label: "Circle fit", icon: <TargetIcon /> },
  { label: "Erase", icon: <EraserIcon /> },
  { label: "Pick", icon: <PeakIcon /> },
];

const WindowButtons = ({ c, restore }: { c: string; restore?: boolean }) => (
  <>
    <WinControl aria-label="Minimise"><Minimise c={c} /></WinControl>
    <WinControl aria-label="Maximise"><Maximise c={c} restore={restore} /></WinControl>
    <WinControl aria-label="Close"><Cross color={c} w={1} /></WinControl>
  </>
);

/* ---------- screens ---------- */

const Editor = () => (
  <EditorStrip>
    <EditorTab><Cross size={13} color="#999" w={0.8} /></EditorTab>
    <EditorActions>
      <svg width="10" height="4" fill="#ccc"><circle cx="2" cy="2" r="1.2" /><circle cx="8" cy="2" r="1.2" /></svg>
      <Cross size={12} color="#ddd" w={1.4} />
    </EditorActions>
    <EditorText><span>能会</span><span>输出</span></EditorText>
    <Badge><GridBitsIcon /><MascotIcon /></Badge>
    <ChatBox>
      <svg width="14" height="14" fill="none" stroke="#999" strokeWidth="1.3"><path d="M0 1L13 7L0 13M0 7H6" /></svg>
      <svg width="12" height="14" fill="none" stroke="#999" strokeWidth="1.3"><path d="M1 4.5L6 9.5L11 4.5" /></svg>
    </ChatBox>
    <EditorStatus><span>er</span><BellIcon /></EditorStatus>
  </EditorStrip>
);

const ImageViewer = () => (
  <ImageWindow aria-label="Image 1">
    <TitleBar $h={39}>
      <MLogo />
      <TitleText>Image 1 (φ:0.00-0.50) - iMosflm version 7.4.0, 16th September 2021</TitleText>
      <WindowButtons c="#000" />
    </TitleBar>
    <MenuBar>
      <MenuItem>Image</MenuItem>
      <MenuItem>View</MenuItem>
      <MenuItem>Settings</MenuItem>
    </MenuBar>
    <ToolRow>
      <ToolGroup $grow $end>
        <IconButton aria-label="Previous image"><ArrowIcon back /></IconButton>
        <IconButton aria-label="Next image"><ArrowIcon /></IconButton>
        <ComboBox>
          <select aria-label="Image file"><option>tleb000001.cbf</option></select>
          <Arrow><DropArrow /></Arrow>
        </ComboBox>
        <FieldLabel htmlFor="goto">Go to</FieldLabel>
        <Entry id="goto" $w={44} />
        <FieldLabel htmlFor="sum">Sum</FieldLabel>
        <ComboBox $w={48}>
          <select id="sum" />
          <Arrow><DropArrow /></Arrow>
        </ComboBox>
      </ToolGroup>
      <ToolGroup $end>
        <IconButton aria-label="Zoom in"><ZoomIcon /></IconButton>
        <IconButton aria-label="Zoom out"><ZoomIcon out /></IconButton>
        <IconButton aria-label="Fit image"><FitIcon /></IconButton>
        <IconButton aria-label="Contrast" $on><ContrastIcon /></IconButton>
        <IconButton aria-label="Lattice points"><DottedIcon /></IconButton>
        <FieldLabel htmlFor="lattice" $off $before={2} $after={7}>Lattice</FieldLabel>
        <ComboBox $w={40} $off>
          <select id="lattice" disabled />
          <Arrow><DropArrow off /></Arrow>
        </ComboBox>
      </ToolGroup>
    </ToolRow>
    <ToolRow>
      <ToolGroup>
        {overlayTools.map((t) => <IconButton key={t.label} aria-label={t.label} $on={t.on}>{t.icon}</IconButton>)}
      </ToolGroup>
      <ToolGroup>
        {editTools.map((t) => <IconButton key={t.label} aria-label={t.label} $on={t.on}>{t.icon}</IconButton>)}
      </ToolGroup>
      <ToolGroup>
        {["h", "k", "l"].map((axis) => (
          <React.Fragment key={axis}>
            <FieldLabel htmlFor={axis} $before={3} $after={2}>{axis}</FieldLabel>
            <Entry id={axis} $w={34} />
          </React.Fragment>
        ))}
        <IconButton aria-label="Stop"><AlertIcon /></IconButton>
      </ToolGroup>
      <ToolGroup $grow />
    </ToolRow>
    <Canvas><Diffraction /></Canvas>
  </ImageWindow>
);

export default function App() {
  return (
    <>
      <Global />
      <Desktop>
        <Editor />
        <MainWindow>
          <TitleBar $h={30} $dim>
            <MLogo />
            <TitleText>iMosflm version 7.4.0, 16th September 2021</TitleText>
            <WindowButtons c="#8c8c8c" restore />
          </TitleBar>
          <MenuBar>
            <MenuItem>Session</MenuItem>
            <MenuItem>Settings</MenuItem>
            <MenuItem $end>Help</MenuItem>
          </MenuBar>
          <MainToolbar>
            <IconButton aria-label="New" $w={33}><NewIcon /></IconButton>
            <IconButton aria-label="Open" $w={33}><OpenIcon /></IconButton>
            <IconButton aria-label="Save" $w={31}><SaveIcon /></IconButton>
            <Divider />
            <IconButton aria-label="Add images"><AddImageIcon /></IconButton>
            <Reading><BeamXIcon /><input aria-label="Beam x" defaultValue="126.94" /></Reading>
            <Reading><BeamYIcon /><input aria-label="Beam y" defaultValue="129.74" /></Reading>
            <Reading><DistanceIcon /><input aria-label="Distance" defaultValue="233.00" /></Reading>
            <Spacer />
            <MLogo blue />
          </MainToolbar>
          <Body>
            <Sidebar>
              {steps.map((s) => (
                <SideItem key={s.name} $on={s.on} disabled={s.off}>{s.icon}{s.name}</SideItem>
              ))}
            </Sidebar>
            <Content>
              <Heading>Images</Heading>
              <TreeArea>
                <Tree>
                  {roots.map((r) => (
                    <TreeRow key={r.name}>
                      <TreeName><Fold>{r.open && <MinusBox />}</Fold>{r.icon}{r.name}</TreeName>
                    </TreeRow>
                  ))}
                  <TreeRow><TreeName $child><Stub /><MatrixIcon />Matrix</TreeName></TreeRow>
                  {images.map((im) => (
                    <TreeRow key={im.name}>
                      <TreeName $child><Stub /><Disc size={20} />{im.name}</TreeName>
                      <span>{im.phi}</span>
                    </TreeRow>
                  ))}
                </Tree>
                <ScrollTrack>
                  <ScrollButton aria-label="Scroll up">
                    <svg width="20" height="20"><path d="M10 1L1 19H19Z" fill={face} /><path d="M10 1L1 19" stroke="#fafafa" strokeWidth="2" /><path d="M10 1L19 18.5H1" fill="none" stroke="#8a8a8a" strokeWidth="2" /></svg>
                  </ScrollButton>
                  <ScrollThumb />
                  <ScrollButton aria-label="Scroll down">
                    <svg width="20" height="20"><path d="M10 19L1 1H19Z" fill={face} /><path d="M19 1.5H1L10 19" fill="none" stroke="#fafafa" strokeWidth="2" /><path d="M10 19L19 1" stroke="#8a8a8a" strokeWidth="2" /></svg>
                  </ScrollButton>
                </ScrollTrack>
              </TreeArea>
            </Content>
          </Body>
          <StatusBar>
            <StatusCell $grow>Done</StatusCell>
            <StatusCell $w={76} $ok>Green</StatusCell>
            <StatusCell $w={109}>warnings 0</StatusCell>
          </StatusBar>
        </MainWindow>
        <ImageViewer />
        <Popup>
          <PlotFrame><Histogram /></PlotFrame>
          <ResetButton>Reset</ResetButton>
        </Popup>
      </Desktop>
    </>
  );
}
